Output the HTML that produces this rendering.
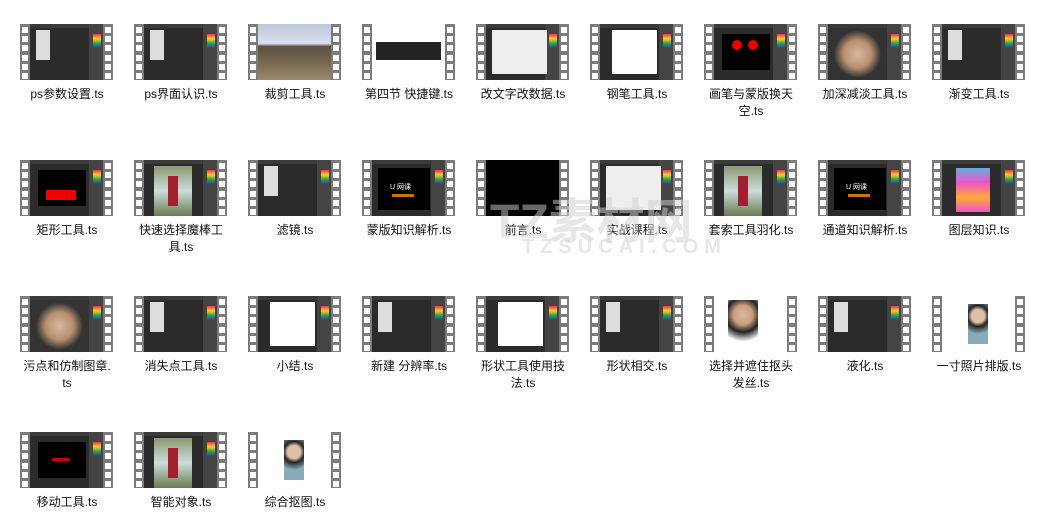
<!DOCTYPE html>
<html><head><meta charset="utf-8"><style>
body{margin:0;width:1045px;height:521px;background:#fff;overflow:hidden;position:relative;font-family:"Liberation Sans","Noto Sans CJK SC",sans-serif;}
.it{position:absolute;width:114px;}
.th{position:absolute;left:6px;top:0;width:93px;height:56px;background:#7b7b7b;}
.th .c{position:absolute;left:10px;top:0;width:73px;height:56px;background:#2b2b2b;overflow:hidden}
.h{position:absolute;width:6px;height:6px;background:#fff}
.lb{position:absolute;left:0;top:62px;width:106px;text-align:center;font-size:12px;line-height:17px;color:#111}
.pan{position:absolute;right:0;top:0;width:14px;height:56px;background:#444}
.bar{position:absolute;left:0;top:0;right:0;height:4px;background:#3a3a3a}
.wm{position:absolute;color:#d0d0d0;font-weight:bold;z-index:5}
</style></head><body>
<div class="wm" style="left:490px;top:182px;font-size:48px;opacity:.5">TZ素材网</div>
<div class="wm" style="left:522px;top:236px;font-size:20px;letter-spacing:6px;opacity:.5">TZSUCAI.COM</div>
<script>
const items=[
["ps参数设置.ts","ps"],["ps界面认识.ts","ps"],["裁剪工具.ts","photo"],["第四节 快捷键.ts","key"],["改文字改数据.ts","white"],["钢笔工具.ts","wc"],["画笔与蒙版换天<br>空.ts","red"],["加深减淡工具.ts","face"],["渐变工具.ts","ps"],
["矩形工具.ts","redbox"],["快速选择魔棒工<br>具.ts","person"],["滤镜.ts","ps"],["蒙版知识解析.ts","logo"],["前言.ts","black"],["实战课程.ts","white"],["套索工具羽化.ts","person2"],["通道知识解析.ts","logo"],["图层知识.ts","color"],
["污点和仿制图章.<br>ts","face"],["消失点工具.ts","ps"],["小结.ts","wc"],["新建 分辨率.ts","ps"],["形状工具使用技<br>法.ts","wc"],["形状相交.ts","ps"],["选择并遮住抠头<br>发丝.ts","face2"],["液化.ts","ps"],["一寸照片排版.ts","id"],
["移动工具.ts","redtxt"],["智能对象.ts","person"],["综合抠图.ts","id"]];
let h='';
items.forEach((it,i)=>{
 const col=i%9,row=Math.floor(i/9);
 const x=14+col*114,y=24+row*136;
 let holes='';
 for(let k=0;k<6;k++){holes+=`<div class="h" style="left:2px;top:${3+k*9.2}px"></div><div class="h" style="left:85px;top:${3+k*9.2}px"></div>`;}
 let c='<div class="bar"></div><div class="pan"></div>';
 const t=it[1];
 if(t=='photo')c='<div style="position:absolute;inset:0;background:linear-gradient(#bcc8d8 0,#dde 35%,#5a5040 40%,#7a6a50 70%,#9a8a70)"></div>';
 if(t=='key')c='<div style="position:absolute;inset:0;background:#fff"></div><div style="position:absolute;left:4px;top:18px;width:65px;height:18px;background:#222"></div>';
 if(t=='white')c+='<div style="position:absolute;left:6px;top:6px;width:55px;height:44px;background:#eee"></div>';
 if(t=='wc')c+='<div style="position:absolute;left:12px;top:6px;width:45px;height:44px;background:#fff"></div>';
 if(t=='red')c+='<div style="position:absolute;left:8px;top:10px;width:48px;height:36px;background:#000"></div><div style="position:absolute;left:18px;top:16px;width:10px;height:10px;border-radius:50%;background:#e00"></div><div style="position:absolute;left:34px;top:16px;width:10px;height:10px;border-radius:50%;background:#e00"></div>';
 if(t=='face')c+='<div style="position:absolute;left:0;top:4px;width:59px;height:52px;background:radial-gradient(circle at 50% 50%,#d8b8a0 0,#b89070 35%,#333 60%)"></div>';
 if(t=='face2')c='<div style="position:absolute;inset:0;background:#fff"></div><div style="position:absolute;left:14px;top:4px;width:30px;height:50px;background:radial-gradient(circle at 50% 30%,#d8b8a0 0,#c9a080 25%,#222 45%,#fff 70%)"></div>';
 if(t=='redbox')c+='<div style="position:absolute;left:8px;top:10px;width:48px;height:36px;background:#000"></div><div style="position:absolute;left:16px;top:30px;width:30px;height:10px;background:#e00"></div>';
 if(t=='redtxt')c+='<div style="position:absolute;left:8px;top:10px;width:48px;height:36px;background:#000"></div><div style="position:absolute;left:22px;top:26px;width:18px;height:3px;background:#c00"></div>';
 if(t=='person'||t=='person2')c+='<div style="position:absolute;left:10px;top:6px;width:38px;height:50px;background:linear-gradient(#8a9a70,#cdd,#6a7a50)"></div><div style="position:absolute;left:24px;top:16px;width:10px;height:30px;background:#a02030"></div>';
 if(t=='logo')c+='<div style="position:absolute;left:6px;top:8px;width:52px;height:42px;background:#000"></div><div style="position:absolute;left:18px;top:22px;font-size:7px;color:#fff">U 网课</div><div style="position:absolute;left:20px;top:34px;width:22px;height:3px;background:#c70"></div>';
 if(t=='black')c='<div style="position:absolute;inset:0;background:#000"></div>';
 if(t=='color')c+='<div style="position:absolute;left:14px;top:8px;width:34px;height:44px;background:linear-gradient(#6ad,#e5c,#fa3,#e5c)"></div>';
 if(t=='id')c='<div style="position:absolute;inset:0;background:#fff"></div><div style="position:absolute;left:26px;top:8px;width:20px;height:40px;background:radial-gradient(circle at 50% 30%,#e0c0a8 0,#e0c0a8 22%,#222 35%,#8ab 60%)"></div>';
 if(t=='ps')c+='<div style="position:absolute;left:6px;top:6px;width:14px;height:30px;background:#ddd"></div><div style="position:absolute;right:2px;top:10px;width:8px;height:14px;background:linear-gradient(#e33,#fc3,#3a3,#33c)"></div>';
 else if(t!='black'&&t!='key'&&t!='photo'&&t!='face2'&&t!='id')c+='<div style="position:absolute;right:2px;top:10px;width:8px;height:14px;background:linear-gradient(#e33,#fc3,#3a3,#33c)"></div>';
 h+=`<div class="it" style="left:${x}px;top:${y}px"><div class="th">${holes}<div class="c">${c}</div></div><div class="lb">${it[0]}</div></div>`;
});
document.write(h);
</script>
</body></html>
